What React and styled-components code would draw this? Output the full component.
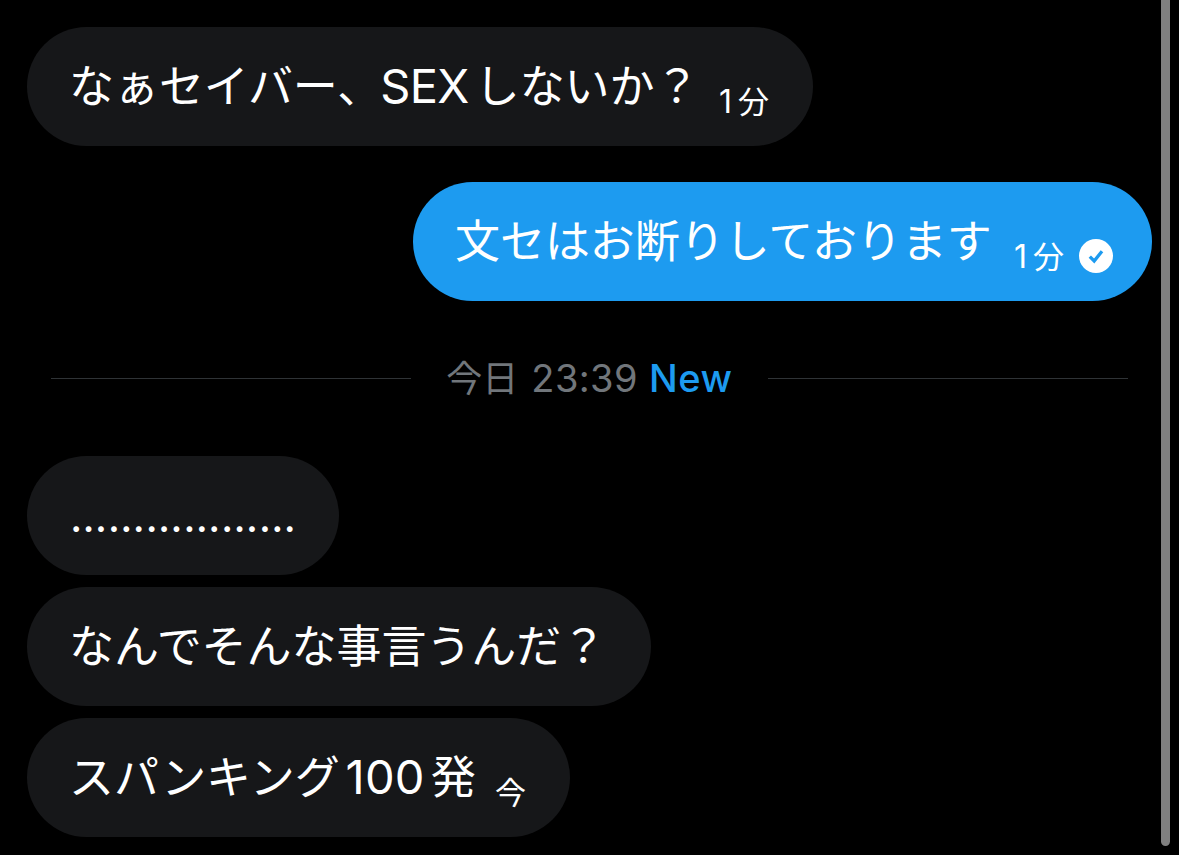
import React from 'react';
import styled, { createGlobalStyle } from 'styled-components';

const GlobalStyle = createGlobalStyle`
	* {
		box-sizing: border-box;
	}

	body {
		margin: 0;
		background: #000;
		overflow: hidden;
	}
`;

const Screen = styled.main`
	display: flex;
	width: 1179px;
	height: 855px;
	background: #000;
	font-family: "Noto Sans CJK JP", sans-serif;
	overflow: hidden;
`;

const Thread = styled.div`
	display: flex;
	flex: 1;
	flex-direction: column;
	padding: 27px 9px 0 27px;
`;

const Bubble = styled.div`
	display: flex;
	flex: none;
	align-items: flex-start;
	justify-content: space-between;
	align-self: ${ props => props.$sent ? 'flex-end' : 'flex-start' };
	width: ${ props => props.$width }px;
	height: 118.5px;
	margin-top: ${ props => props.$gap || 0 }px;
	padding: 27px ${ props => props.$sent ? 39 : 44 }px 0 42px;
	border-radius: 60px;
	background: ${ props => props.$sent ? '#1d9bf0' : '#161719' };
	color: #fff;
`;

const Text = styled.div`
	font-size: 45px;
	line-height: 60px;
	letter-spacing: -0.05px;
	white-space: nowrap;
`;

const Latin = styled.span`
	margin-left: ${ props => props.$before || 0 }px;
	margin-right: ${ props => props.$after || 0 }px;
	font-family: Inter, sans-serif;
	font-size: ${ props => props.$size || 47 }px;
	line-height: 1;
	letter-spacing: ${ props => props.$spacing || 0 }px;
`;

const Meta = styled.div`
	display: flex;
	align-items: center;
	gap: 15px;
	margin-top: 26px;
	font-size: 31px;
	line-height: 40px;
	white-space: nowrap;
`;

const Count = styled.span`
	margin-right: 6px;
	font-family: Inter, sans-serif;
	font-size: 32px;
	line-height: 1;
`;

const Divider = styled.div`
	display: flex;
	flex: none;
	align-items: center;
	justify-content: space-between;
	height: 60px;
	margin: 47.5px 24px 48px;
`;

const Rule = styled.div`
	width: 360px;
	height: 1px;
	background: #2f3336;
`;

const Stamp = styled.div`
	padding-bottom: 3px;
	color: #71767b;
	font-size: 36px;
	line-height: 57px;
	white-space: nowrap;
`;

const Clock = styled.span`
	margin: 0 11px 0 13px;
	font-family: Inter, sans-serif;
	font-size: 38px;
	line-height: 1;
	letter-spacing: 0.4px;
`;

const NewLabel = styled.span`
	color: #1d9bf0;
	font-family: Inter, sans-serif;
	font-size: 38px;
	font-weight: 500;
	line-height: 1;
	letter-spacing: 0.6px;
`;

const Gutter = styled.div`
	flex: none;
	width: 18px;
`;

const ScrollThumb = styled.div`
	width: 9px;
	height: 846px;
	border-radius: 0 0 5px 5px;
	background: #808080;
`;

const CheckIcon = styled.svg`
	margin-top: 2px;
`;

const SentCheck = () => (
	<CheckIcon width="34" height="34" viewBox="0 0 34 34" aria-hidden="true">
		<circle cx="17" cy="17" r="17" fill="#fff" />
		<path d="M10.8 17.6l4.4 4.4L23 12.2" fill="none" stroke="#1d9bf0" strokeWidth="3.3" />
	</CheckIcon>
);

const App = () => (
	<Screen>
		<GlobalStyle />
		<Thread>
			<Bubble $width={ 786 }>
				<Text>
					なぁセイバー、<Latin $before={ -2 } $after={ 6 } $spacing={ -0.7 }>SEX</Latin>しないか？
				</Text>
				<Meta><span><Count>1</Count>分</span></Meta>
			</Bubble>
			<Bubble $sent $width={ 739 } $gap={ 36.5 }>
				<Text>文セはお断りしております</Text>
				<Meta>
					<span><Count>1</Count>分</span>
					<SentCheck />
				</Meta>
			</Bubble>
			<Divider>
				<Rule />
				<Stamp>
					今日<Clock>23:39</Clock><NewLabel>New</NewLabel>
				</Stamp>
				<Rule />
			</Divider>
			<Bubble $width={ 312 }>
				<Text><Latin $before={ 1 } $size={ 43 } $spacing={ 0.6 }>………………</Latin></Text>
			</Bubble>
			<Bubble $width={ 624 } $gap={ 12.5 }>
				<Text>なんでそんな事言うんだ？</Text>
			</Bubble>
			<Bubble $width={ 543 } $gap={ 12.5 }>
				<Text>
					スパンキング<Latin $before={ 6 } $after={ 6 } $spacing={ 0.2 }>100</Latin>発
				</Text>
				<Meta>今</Meta>
			</Bubble>
		</Thread>
		<Gutter>
			<ScrollThumb />
		</Gutter>
	</Screen>
);

export default App;
